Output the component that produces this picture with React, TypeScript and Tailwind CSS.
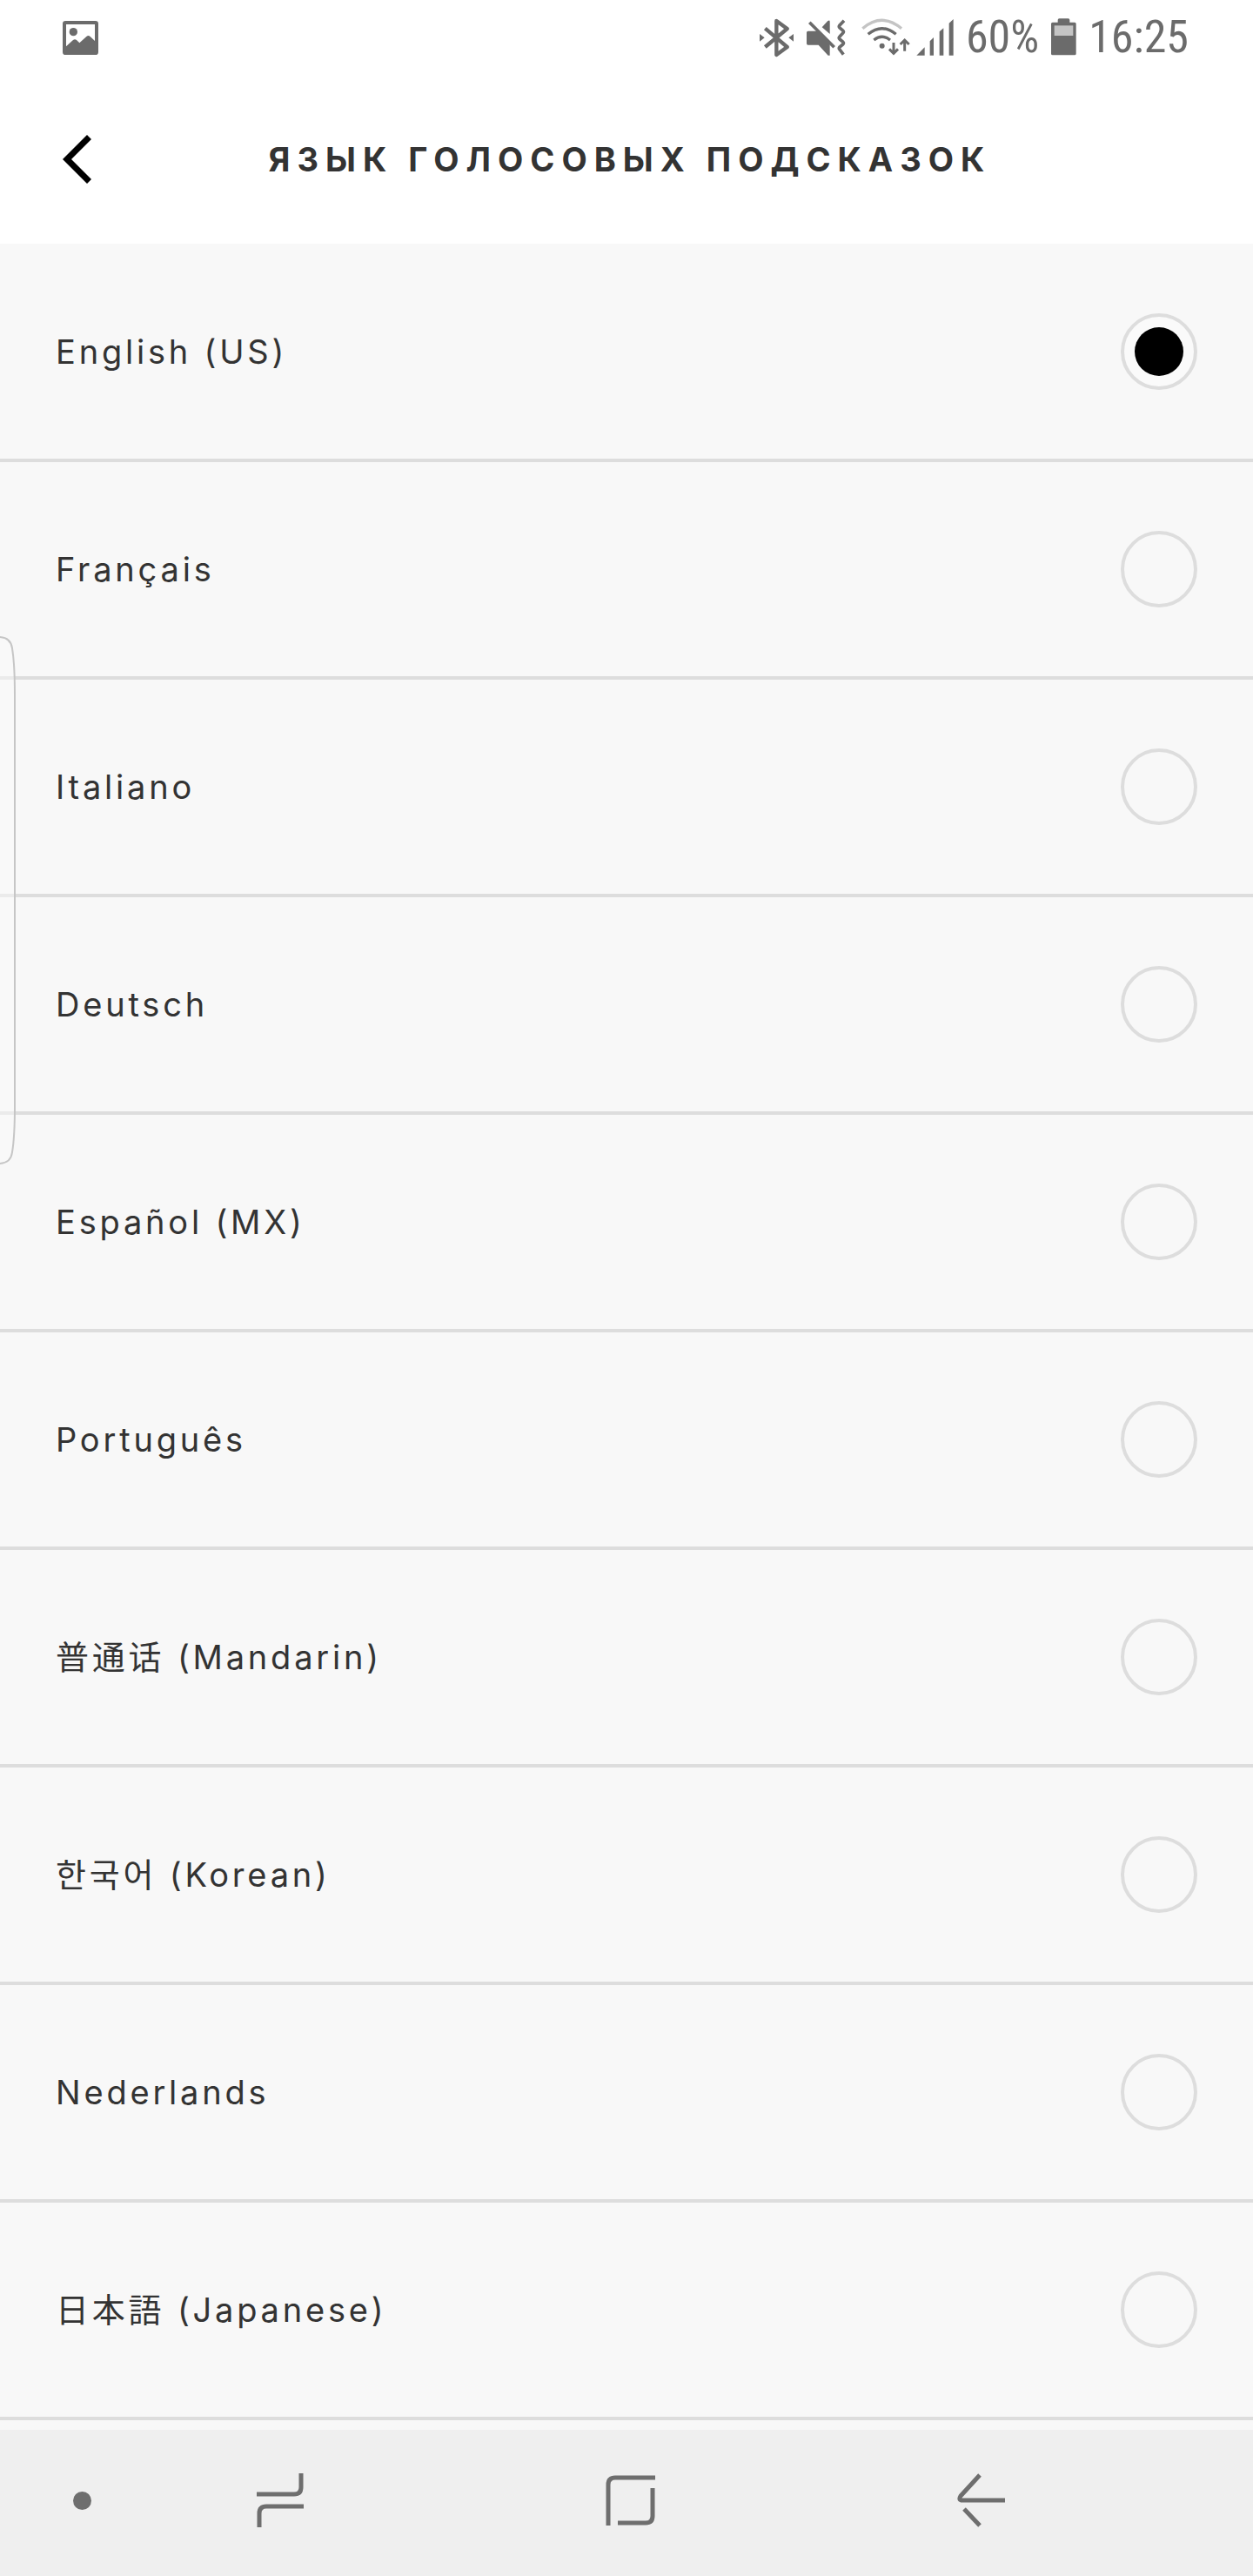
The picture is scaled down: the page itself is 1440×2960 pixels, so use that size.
import { useState } from 'react';

interface Language {
  id: string;
  label: string;
}

const LANGUAGES: Language[] = [
  { id: 'en-US', label: 'English (US)' },
  { id: 'fr', label: 'Français' },
  { id: 'it', label: 'Italiano' },
  { id: 'de', label: 'Deutsch' },
  { id: 'es-MX', label: 'Español (MX)' },
  { id: 'pt', label: 'Português' },
  { id: 'zh-CN', label: '普通话 (Mandarin)' },
  { id: 'ko', label: '한국어 (Korean)' },
  { id: 'nl', label: 'Nederlands' },
  { id: 'ja', label: '日本語 (Japanese)' },
];

const PictureIcon = () => (
  <svg viewBox="0 0 123 117" className="w-[41px] h-[39px]" fill="currentColor">
    <path
      fillRule="evenodd"
      d="M10 0h103a10 10 0 0 1 10 10v97a10 10 0 0 1-10 10H10a10 10 0 0 1-10-10V10A10 10 0 0 1 10 0ZM12 12v76l24-22q6-5 12 0l10 10 24-22q7-6 13 0l16 15V12Z"
    />
    <circle cx="37" cy="38" r="14" />
  </svg>
);

const BluetoothIcon = () => (
  <svg viewBox="63 60 120 138" className="w-10 h-[46px]" fill="currentColor">
    <path
      d="M82 98 158 162 121 189V72L158 99 82 162"
      fill="none"
      stroke="currentColor"
      strokeWidth="13"
      strokeLinejoin="round"
    />
    <path d="M63 117v26l17-13ZM180 117v26l-17-13Z" />
  </svg>
);

const MuteIcon = () => (
  <svg viewBox="225 60 138 138" className="w-[46px] h-[46px]" fill="currentColor">
    <path d="M230 107h36l39 42v42h-6l-33-36h-36q-5 0-5-5v-38q0-5 5-5Z" />
    <path d="M278 94 298 72q7-4 7 2v43Z" />
    <path d="M235 77 320 163" stroke="currentColor" strokeWidth="11" />
    <path
      d="M354 71 339 87q-4 5 0 9l11 9q5 5 0 9l-11 12q-5 5 0 9l11 9q5 5 0 9l-11 9q-4 5 0 9l13 17"
      fill="none"
      stroke="currentColor"
      strokeWidth="11"
    />
  </svg>
);

const WifiIcon = () => (
  <svg viewBox="405 60 180 138" className="w-[60px] h-[46px]" fill="none" stroke="currentColor" strokeWidth="10">
    <path d="M418 98Q485 42 552 98" opacity="0.4" />
    <path d="M437 118Q485 78 533 118" />
    <path d="M457 138Q485 116 513 138" />
    <circle cx="485" cy="158" r="9" fill="currentColor" stroke="none" />
    <path d="M525 147v36M510 169l15 15 15-15M563 176v-36M548 153l15-15 15 15" strokeWidth="9" />
  </svg>
);

const SignalIcon = () => (
  <svg viewBox="603 60 129 138" className="w-[43px] h-[46px]" fill="currentColor">
    <path d="M604 191h28v-28ZM650 191h13v-62l-13 13ZM683 191h14V97l-14 12ZM716 191h15V66l-15 14Z" />
  </svg>
);

const BatteryIcon = () => (
  <svg viewBox="320 60 87 138" className="w-[29px] h-[46px]" fill="currentColor">
    <path d="M348 64h31q5 0 5 5v8h17q5 0 5 5v103q0 5-5 5h-76q-5 0-5-5V82q0-5 5-5h18v-8q0-5 5-5Z" />
    <path d="M331 88h65v35h-65Z" fill="#c4c4c4" />
  </svg>
);

const StatusBar = () => (
  <div className="h-[86px] pl-[72px] pr-[74px] flex items-center justify-between text-[#6b6b6b]">
    <PictureIcon />
    <div className="flex items-center gap-3.5 text-[52px] leading-none font-['Roboto_Condensed','Liberation_Sans_Narrow',Roboto,sans-serif]">
      <BluetoothIcon />
      <MuteIcon />
      <div className="flex items-center gap-1.5">
        <WifiIcon />
        <SignalIcon />
      </div>
      <span>60%</span>
      <BatteryIcon />
      <span>16:25</span>
    </div>
  </div>
);

const Header = () => (
  <header className="h-[194px] px-[72px] grid grid-cols-[1fr_auto_1fr] items-center">
    <button type="button" aria-label="Назад" className="justify-self-start">
      <svg viewBox="0 0 33 56" className="w-[33px] h-14 block" fill="#000">
        <path d="M0 28 28 0 33 5 10 28 33 51 28 56Z" />
      </svg>
    </button>
    <h1 className="pl-2 text-[38px] leading-none font-bold uppercase tracking-[8px] text-[#333333]">
      Язык голосовых подсказок
    </h1>
  </header>
);

const NavBar = () => (
  <nav className="h-[168px] pr-[111px] pb-1.5 flex items-center bg-[#efefef] text-[#6e6e6e]">
    <div className="w-[120px] pr-[15px] flex justify-end">
      <span className="w-[21px] h-[21px] rounded-full bg-current" />
    </div>
    <button type="button" aria-label="Недавние" className="flex-1 flex justify-center">
      <svg viewBox="0 0 54 62" className="w-[54px] h-[62px]" fill="none" stroke="currentColor" strokeWidth="5">
        <path d="M51 0v16q0 8-8 8H0M3 62V46q0-8 8-8h43" />
      </svg>
    </button>
    <button type="button" aria-label="Главный экран" className="flex-1 flex justify-center">
      <svg viewBox="0 0 57 58" className="w-[57px] h-[58px]" fill="none" stroke="currentColor" strokeWidth="5">
        <path d="M3 58V11q0-8 8-8h46M54 15v32q0 8-8 8H14" />
      </svg>
    </button>
    <button type="button" aria-label="Назад" className="flex-1 flex justify-center">
      <svg viewBox="0 0 55 62" className="w-[55px] h-[62px]" fill="none" stroke="currentColor" strokeWidth="5">
        <path d="M26 2 4 26q-3 5 2 5h49M8 41l18 19" strokeLinejoin="round" />
      </svg>
    </button>
  </nav>
);

// Handle of the edge panel, lies over the list
const EdgeHandle = () => (
  <svg viewBox="0 0 18 607" className="absolute left-0 top-[731px] w-[18px] h-[607px]">
    <path
      d="M-2 1C9 1 13 6 14 14 16 26 17 40 17 68V539C17 567 16 581 14 593 13 601 9 606-2 606Z"
      fill="#f9f9f9"
      fillOpacity="0.5"
      stroke="#c6c6c6"
      strokeWidth="2"
    />
  </svg>
);

export const VoicePromptLanguagePage = () => {
  const [selected, setSelected] = useState('en-US');

  return (
    <div className="relative min-h-screen flex flex-col bg-white font-[Inter,'Noto_Sans_CJK_SC','Noto_Sans_CJK_KR',sans-serif]">
      <StatusBar />
      <Header />

      <main className="flex-1 pt-px bg-[#f8f8f8]">
        {LANGUAGES.map((language) => (
          <label
            key={language.id}
            lang={language.id}
            className="h-[250px] px-16 flex items-center justify-between border-b-4 border-[#dddddd] text-[38px] text-[#333333] tracking-widest cursor-pointer"
          >
            <span>{language.label}</span>
            <input
              type="radio"
              name="voice-language"
              value={language.id}
              checked={selected === language.id}
              onChange={() => setSelected(language.id)}
              className="appearance-none w-[88px] h-[88px] shrink-0 grid place-items-center rounded-full border-4 border-[#dddddd] checked:bg-[#fafafa] checked:before:content-[''] checked:before:w-14 checked:before:h-14 checked:before:rounded-full checked:before:bg-black"
            />
          </label>
        ))}
      </main>

      <NavBar />
      <EdgeHandle />
    </div>
  );
};

export default VoicePromptLanguagePage;
